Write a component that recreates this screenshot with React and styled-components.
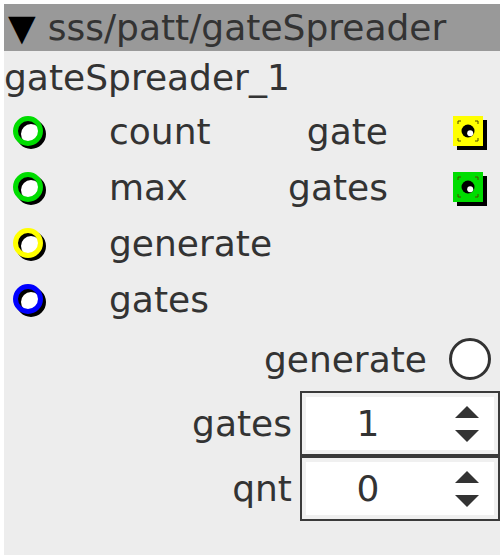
import React from "react";
import styled, { createGlobalStyle } from "styled-components";

const Global = createGlobalStyle`
  html, body { margin: 0; padding: 0; background: #ffffff; }
  body { padding: 4px; }
`;

const Panel = styled.div`
  width: 496px;
  height: 551px;
  background: #ededed;
  font-family: "DejaVu Sans", "Liberation Sans", sans-serif;
  font-size: 36px;
  color: #333333;
  display: flex;
  flex-direction: column;
`;

const Header = styled.div`
  height: 47px;
  background: #999999;
  display: flex;
  align-items: center;
  padding-left: 4px;
  white-space: nowrap;
`;

const Arrow = styled.span`
  color: #000000;
  margin-right: 12px;
`;

const Title = styled.div`
  height: 52px;
  display: flex;
  align-items: center;
  padding-left: 0px;
`;

const PortRow = styled.div`
  height: 56px;
  display: flex;
  align-items: center;
`;

const LeftCell = styled.div`
  width: 105px;
  padding-left: 9px;
  box-sizing: border-box;
  display: flex;
  align-items: center;
`;

const Label = styled.span`
  flex: ${(p) => (p.$grow ? 1 : "none")};
`;

const RightCell = styled.div`
  width: 112px;
  padding-left: 65px;
  box-sizing: border-box;
  display: flex;
  align-items: center;
`;

const ControlRow = styled.div`
  display: flex;
  align-items: center;
  justify-content: flex-end;
  gap: ${(p) => p.$gap || 8}px;
  height: ${(p) => p.$h}px;
  padding-right: ${(p) => p.$pr || 0}px;
`;

const Radio = styled.div`
  width: 36px;
  height: 36px;
  border: 3px solid #333333;
  border-radius: 50%;
  background: #ffffff;
`;

const SpinBox = styled.div`
  width: 200px;
  height: 65px;
  box-sizing: border-box;
  border: 2px solid #3a3a3a;
  padding: 4px;
  background: #f0f0f0;
  display: flex;
`;

const SpinField = styled.div`
  flex: 1;
  background: #ffffff;
  display: flex;
  align-items: center;
`;

const SpinValue = styled.span`
  width: 124px;
  text-align: center;
`;

const SpinArrows = styled.div`
  flex: 1;
  display: flex;
  flex-direction: column;
  align-items: center;
  justify-content: center;
  gap: 12px;
  padding-left: 10px;
`;

function RingPort({ color }) {
  return (
    <svg width="40" height="40" viewBox="0 0 40 40">
      <circle cx="15" cy="20" r="10" fill="#ffffff" />
      <circle cx="18" cy="23" r="12.5" fill="none" stroke="#000" strokeWidth="5" />
      <circle cx="15" cy="20" r="12.5" fill="none" stroke={color} strokeWidth="5" />
    </svg>
  );
}

function SquarePort({ color }) {
  const m = "#4a4a00";
  return (
    <svg width="36" height="36" viewBox="0 0 36 36" style={{ marginTop: 6 }}>
      <rect x="4" y="4" width="30" height="30" fill="#000" />
      <rect x="0" y="0" width="30" height="30" fill={color} />
      <path
        d="M5 8 V5 H8 M22 5 H25 V8 M25 22 V25 H22 M8 25 H5 V22"
        fill="none"
        stroke={m}
        strokeWidth="1"
      />
      <circle cx="15" cy="15" r="6.5" fill="#000" />
      <circle cx="17.2" cy="17.2" r="3" fill="#fff" />
    </svg>
  );
}

function Arrows() {
  return (
    <SpinArrows>
      <svg width="24" height="12" viewBox="0 0 24 12">
        <polygon points="12,0 24,12 0,12" fill="#333" />
      </svg>
      <svg width="24" height="12" viewBox="0 0 24 12">
        <polygon points="0,0 24,0 12,12" fill="#333" />
      </svg>
    </SpinArrows>
  );
}

function Spin({ label, value }) {
  return (
    <ControlRow $h={65} $gap={8}>
      <span>{label}</span>
      <SpinBox>
        <SpinField>
          <SpinValue>{value}</SpinValue>
          <Arrows />
        </SpinField>
      </SpinBox>
    </ControlRow>
  );
}

const ports = [
  { left: "count", lc: "#00dd00", right: "gate", rc: "#ffff00" },
  { left: "max", lc: "#00dd00", right: "gates", rc: "#00dd00" },
  { left: "generate", lc: "#ffff00" },
  { left: "gates", lc: "#0000ff" },
];

export default function App() {
  return (
    <>
      <Global />
      <Panel>
        <Header>
          <Arrow>▼</Arrow>
          <span>sss/patt/gateSpreader</span>
        </Header>
        <Title>gateSpreader_1</Title>
        {ports.map((p) => (
          <PortRow key={p.left}>
            <LeftCell>
              <RingPort color={p.lc} />
            </LeftCell>
            <Label $grow>{p.left}</Label>
            {p.right && <Label>{p.right}</Label>}
            {p.right && (
              <RightCell>
                <SquarePort color={p.rc} />
              </RightCell>
            )}
          </PortRow>
        ))}
        <ControlRow $h={64} $gap={22} $pr={9}>
          <span>generate</span>
          <Radio />
        </ControlRow>
        <Spin label="gates" value="1" />
        <Spin label="qnt" value="0" />
      </Panel>
    </>
  );
}
